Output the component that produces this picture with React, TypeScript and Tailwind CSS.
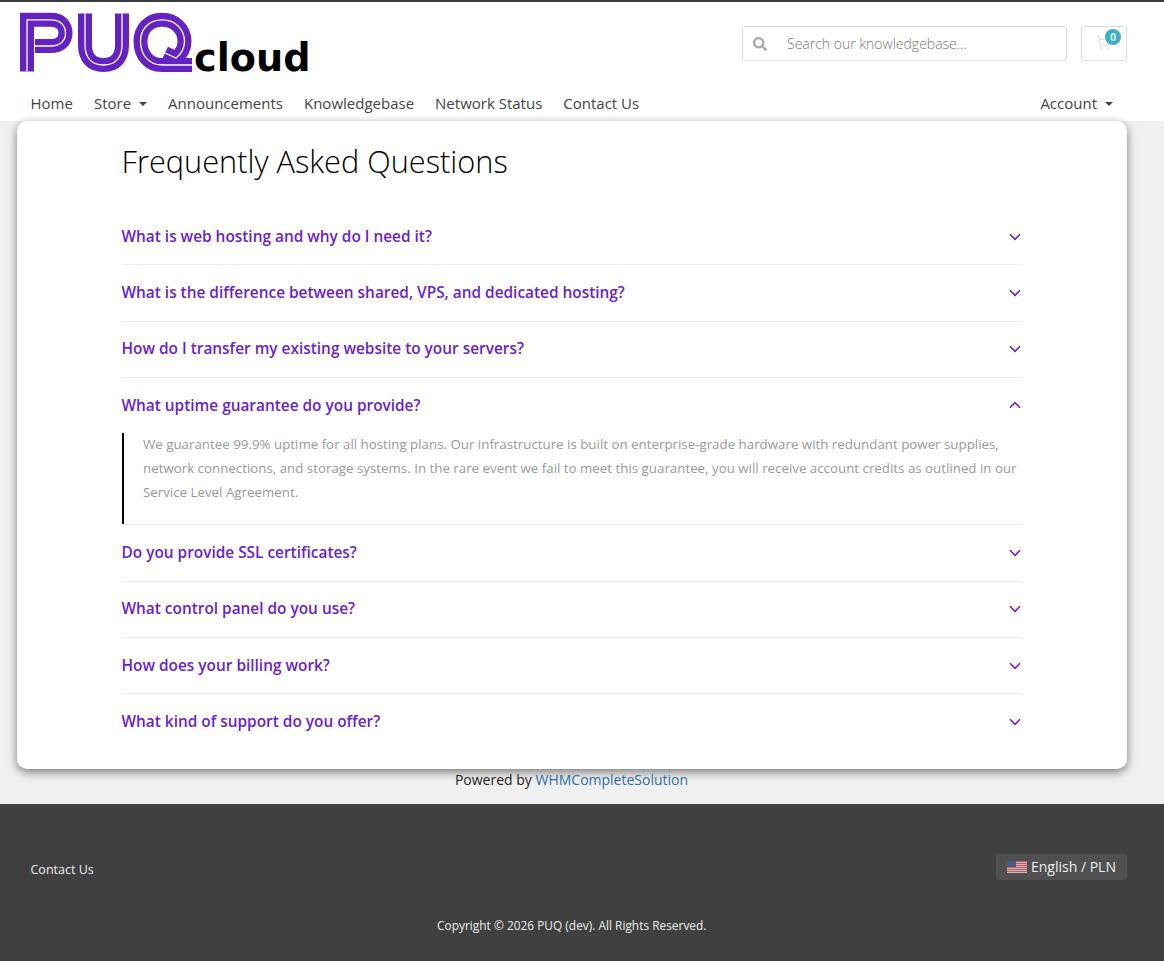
import React from "react";
import { ShoppingCart } from "lucide-react";
import { FaSearch } from "react-icons/fa";

const faqs = [
  { q: "What is web hosting and why do I need it?" },
  { q: "What is the difference between shared, VPS, and dedicated hosting?" },
  { q: "How do I transfer my existing website to your servers?" },
  {
    q: "What uptime guarantee do you provide?",
    a: "We guarantee 99.9% uptime for all hosting plans. Our infrastructure is built on enterprise-grade hardware with redundant power supplies, network connections, and storage systems. In the rare event we fail to meet this guarantee, you will receive account credits as outlined in our Service Level Agreement.",
  },
  { q: "Do you provide SSL certificates?" },
  { q: "What control panel do you use?" },
  { q: "How does your billing work?" },
  { q: "What kind of support do you offer?" },
];

function Logo() {
  const marks = [
    "M27 71.500V19.800H51C60 19.800 65.500 25 65.500 33C65.500 41 60 46 51 46H35",
    "M85 13.500V45C85 58 92 65 103.500 65C115 65 122 58 122 45V13.500",
    "M192 65H162C148 65 140.500 54 140.500 41.500C140.500 29 149 19.800 162 19.800C175 19.800 184.500 29 184.500 41.500C184.500 49 181 54 176 58L165 53",
  ];
  return (
    <svg width="310" height="76" viewBox="14 8 310 76" className="block">
      {marks.map((d, i) => (
        <g key={i} fill="none">
          <path d={d} stroke="#6423c0" strokeWidth="14" />
          <path d={d} stroke="#ffffff" strokeWidth="1.300" />
        </g>
      ))}
      <text x="194" y="71" fontFamily="'DejaVu Sans', sans-serif" fontWeight="700" fontSize="38.200" fill="#000000">
        cloud
      </text>
    </svg>
  );
}

function Caret() {
  return <span className="ml-2 inline-block h-0 w-0 border-x-[4px] border-t-[4px] border-x-transparent border-t-[#444] align-[3px]" />;
}

function Chevron({ up }: { up?: boolean }) {
  return (
    <svg width="12" height="8" viewBox="0 0 12 8" fill="none" className={up ? "rotate-180" : "mt-[1px]"}>
      <path d="M1 1.300L6 6.300L11 1.300" stroke="#6a1fc9" strokeWidth="1.600" />
    </svg>
  );
}

function Flag() {
  return (
    <svg width="20" height="12" viewBox="0 0 20 12" className="opacity-80">
      <rect width="20" height="12" fill="#f3c9cc" />
      {[0, 2, 4, 6, 8, 10].map((y) => (
        <rect key={y} y={y} width="20" height="1" fill="#d9636f" />
      ))}
      <rect width="9" height="6" fill="#4c5a96" />
    </svg>
  );
}

export default function App() {
  return (
    <div className="min-h-[961px] bg-[#f0f0f0] font-['Open_Sans',sans-serif]">
      {/* Header */}
      <header className="h-[121px] border-t-2 border-[#3a3a3a] bg-white">
        <div className="flex items-start justify-between pl-[14px] pr-[37px] pt-[6px]">
          <Logo />
          <div className="flex gap-[14px] pt-[18px]">
            <div className="flex h-[35px] w-[325px] items-center rounded-[3px] border border-[#dddddd] pl-[10px]">
              <FaSearch size={14} className="text-[#a8a8a8]" />
              <span className="ml-[20px] text-[14px] font-light text-[#777]">Search our knowledgebase...</span>
            </div>
            <div className="relative h-[35px] w-[46px] rounded-[3px] border border-[#dddddd]">
              <ShoppingCart size={15} className="absolute left-[14px] top-[8px] text-[#e2e2e2]" />
              <span className="absolute left-[23px] top-[2px] flex h-4 w-4 items-center justify-center rounded-full bg-[#3fb0c3] text-[10px] font-semibold text-white">
                0
              </span>
            </div>
          </div>
        </div>
        <nav className="flex items-center justify-between pl-[30.500px] pr-[51px] pt-[7px] text-[15px] leading-[24px] text-[#444]">
          <div className="flex gap-[21px]">
            <span>Home</span>
            <span>
              Store
              <Caret />
            </span>
            <span>Announcements</span>
            <span>Knowledgebase</span>
            <span>Network Status</span>
            <span>Contact Us</span>
          </div>
          <span>
            Account
            <Caret />
          </span>
        </nav>
      </header>

      {/* FAQ card */}
      <main className="mx-[17px] w-[1110px] rounded-[10px] bg-white pb-[19px] pl-[104.500px] pr-[105px] pt-[19px] shadow-[0_3px_10px_rgba(0,0,0,0.5)]">
        <h1 className="h-[47px] text-[30.720px] font-light leading-[43px] text-black">Frequently Asked Questions</h1>
        <div className="mt-[22px]">
          {faqs.map((item, i) => (
            <div key={item.q} className={i < faqs.length - 1 ? "border-b border-[#eeeeee]" : ""}>
              <div className="flex h-[55.330px] items-center justify-between pb-[1px] pr-[1px]">
                <span className="text-[15.400px] font-semibold text-[#6a1fc9]">{item.q}</span>
                <Chevron up={!!item.a} />
              </div>
              {item.a && (
                <div className="flow-root h-[91px] border-l-2 border-black pl-[19.500px] text-[13.320px] leading-[24px] text-[#999]">
                  <p className="-mt-px">{item.a}</p>
                </div>
              )}
            </div>
          ))}
        </div>
      </main>

      <p className="h-[35px] pr-[21px] pt-[1px] text-center text-[14px] leading-[20px] text-[#222]">
        Powered by <span className="text-[#2f6ea5]">WHMCompleteSolution</span>
      </p>

      {/* Footer */}
      <footer className="h-[157px] bg-[#404040] pl-[30.500px] pr-[37px] pt-[50px] text-white">
        <div className="flex items-start justify-between">
          <span className="pt-[6px] text-[12.500px] leading-[20px] text-[#eeeeee]">Contact Us</span>
          <div className="flex h-[26px] w-[131px] items-center justify-center gap-[4px] rounded-[3px] bg-[#505050] text-[14px] text-[#eeeeee]">
            <Flag />
            English / PLN
          </div>
        </div>
        <p className="mt-[35px] pr-[14px] text-center text-[11.900px] leading-[20px] text-[#eeeeee]">
          Copyright © 2026 PUQ (dev). All Rights Reserved.
        </p>
      </footer>
    </div>
  );
}
